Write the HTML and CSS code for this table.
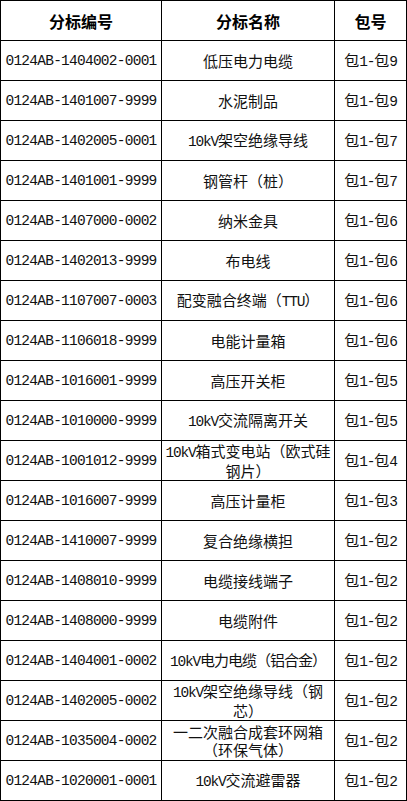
FILE: index.html
```html
<!DOCTYPE html>
<html lang="zh-CN">
<head>
<meta charset="utf-8">
<title>分标</title>
<link rel="stylesheet" href="styles.css">
</head>
<body>
<table class="bid-table">
  <colgroup>
    <col class="c-code">
    <col class="c-name">
    <col class="c-pkg">
  </colgroup>
  <thead>
    <tr><th>分标编号</th><th>分标名称</th><th>包号</th></tr>
  </thead>
  <tbody>
    <tr><td class="code">0124AB-1404002-0001</td><td>低压电力电缆</td><td>包<span class="en">1-</span>包<span class="en">9</span></td></tr>
    <tr><td class="code">0124AB-1401007-9999</td><td>水泥制品</td><td>包<span class="en">1-</span>包<span class="en">9</span></td></tr>
    <tr><td class="code">0124AB-1402005-0001</td><td><span class="en">10kV</span>架空绝缘导线</td><td>包<span class="en">1-</span>包<span class="en">7</span></td></tr>
    <tr><td class="code">0124AB-1401001-9999</td><td>钢管杆（桩）</td><td>包<span class="en">1-</span>包<span class="en">7</span></td></tr>
    <tr><td class="code">0124AB-1407000-0002</td><td>纳米金具</td><td>包<span class="en">1-</span>包<span class="en">6</span></td></tr>
    <tr><td class="code">0124AB-1402013-9999</td><td>布电线</td><td>包<span class="en">1-</span>包<span class="en">6</span></td></tr>
    <tr><td class="code">0124AB-1107007-0003</td><td>配变融合终端（<span class="en">TTU</span>）</td><td>包<span class="en">1-</span>包<span class="en">6</span></td></tr>
    <tr><td class="code">0124AB-1106018-9999</td><td>电能计量箱</td><td>包<span class="en">1-</span>包<span class="en">6</span></td></tr>
    <tr><td class="code">0124AB-1016001-9999</td><td>高压开关柜</td><td>包<span class="en">1-</span>包<span class="en">5</span></td></tr>
    <tr><td class="code">0124AB-1010000-9999</td><td><span class="en">10kV</span>交流隔离开关</td><td>包<span class="en">1-</span>包<span class="en">5</span></td></tr>
    <tr><td class="code">0124AB-1001012-9999</td><td><span class="en">10kV</span>箱式变电站（欧式硅钢片）</td><td>包<span class="en">1-</span>包<span class="en">4</span></td></tr>
    <tr><td class="code">0124AB-1016007-9999</td><td>高压计量柜</td><td>包<span class="en">1-</span>包<span class="en">3</span></td></tr>
    <tr><td class="code">0124AB-1410007-9999</td><td>复合绝缘横担</td><td>包<span class="en">1-</span>包<span class="en">2</span></td></tr>
    <tr><td class="code">0124AB-1408010-9999</td><td>电缆接线端子</td><td>包<span class="en">1-</span>包<span class="en">2</span></td></tr>
    <tr><td class="code">0124AB-1408000-9999</td><td>电缆附件</td><td>包<span class="en">1-</span>包<span class="en">2</span></td></tr>
    <tr><td class="code">0124AB-1404001-0002</td><td class="tight"><span class="en">10kV</span>电力电缆（铝合金）</td><td>包<span class="en">1-</span>包<span class="en">2</span></td></tr>
    <tr><td class="code">0124AB-1402005-0002</td><td><span class="en">10kV</span>架空绝缘导线（钢芯）</td><td>包<span class="en">1-</span>包<span class="en">2</span></td></tr>
    <tr><td class="code">0124AB-1035004-0002</td><td>一二次融合成套环网箱（环保气体）</td><td>包<span class="en">1-</span>包<span class="en">2</span></td></tr>
    <tr><td class="code">0124AB-1020001-0001</td><td><span class="en">10kV</span>交流避雷器</td><td>包<span class="en">1-</span>包<span class="en">2</span></td></tr>
  </tbody>
</table>
</body>
</html>
```

FILE: styles.css
```css
html, body {
  margin: 0;
  padding: 0;
  background: #fff;
}

body {
  font-family: "Noto Sans CJK SC", "Noto Sans", sans-serif;
  font-size: 15px;
  color: #111;
}

.bid-table {
  border-collapse: collapse;
  table-layout: fixed;
  width: 406px;
}

.c-code { width: 161px; }
.c-name { width: 173px; }
.c-pkg { width: 72px; }

.bid-table th,
.bid-table td {
  border: 1px solid #000;
  height: 40px;
  padding: 0 1px;
  text-align: center;
  vertical-align: middle;
  line-height: 18px;
  box-sizing: border-box;
}

.bid-table th {
  font-weight: bold;
  font-size: 16px;
  color: #000;
}

.bid-table td.code {
  font-family: "Liberation Mono", "DejaVu Sans Mono", monospace;
  font-size: 14.5px;
  letter-spacing: -0.75px;
}

.en {
  font-family: "Liberation Mono", "DejaVu Sans Mono", monospace;
  font-size: 14.5px;
  letter-spacing: -1.2px;
}

.tight {
  letter-spacing: -1px;
  white-space: nowrap;
}
```
